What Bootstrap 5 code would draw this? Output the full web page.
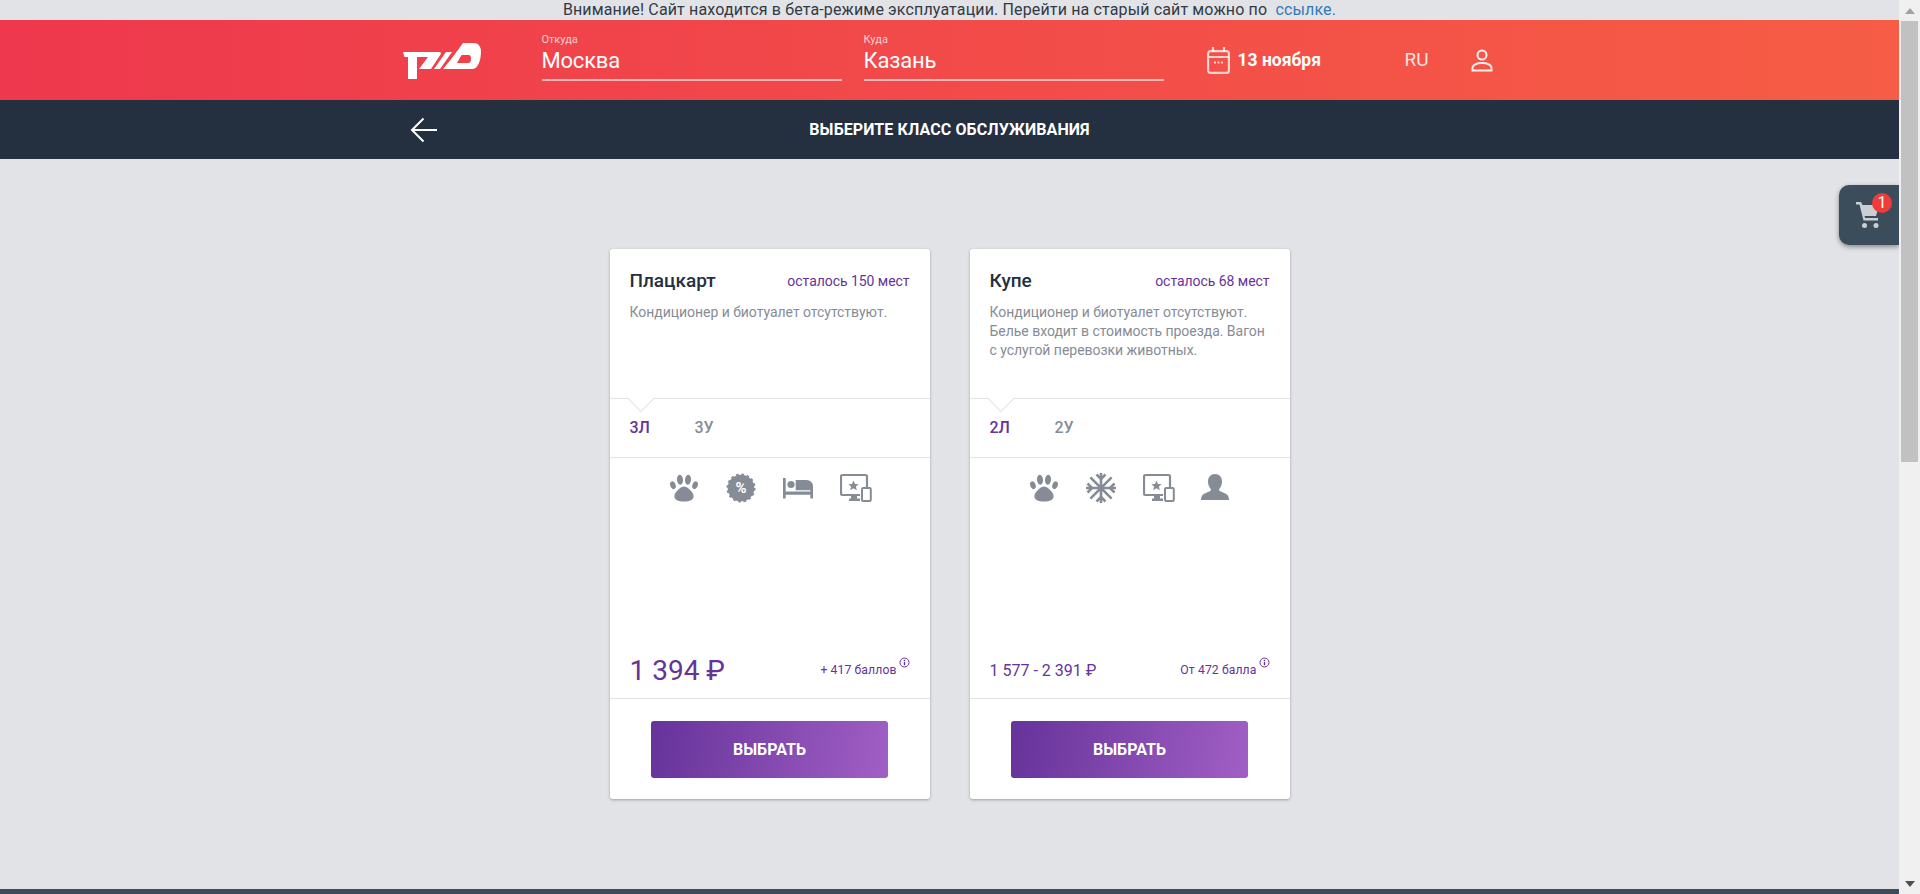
<!DOCTYPE html>
<html lang="ru">
<head>
    <meta charset="UTF-8">
    <meta name="viewport" content="width=device-width, initial-scale=1.0">
    <title>Выберите класс обслуживания</title>
    <link href="https://cdn.jsdelivr.net/npm/bootstrap@5.3.0/dist/css/bootstrap.min.css" rel="stylesheet">
    <style>
        html, body { height: 894px; overflow: hidden; }
        body { font-family: Roboto, "Liberation Sans", sans-serif; background: #e1e3e7; color: #242f3f; }

        /* страница и полоса прокрутки */
        .page-col { width: 1899px; height: 894px; position: relative; overflow: hidden; }
        .fake-scroll { width: 21px; height: 894px; background: #f0f0f0; }
        .fake-scroll .thumb { width: 17px; height: 441px; background: #c1c1c1; margin: 0 2px; }
        .scroll-btn { height: 21px; }

        .beta-note { height: 20px; font-size: 16px; letter-spacing: .14px; line-height: 20px; color: #333a45; white-space: pre; }
        .beta-note a { color: #337ab7; text-decoration: none; }

        /* шапка */
        .top-head { height: 80px; background: linear-gradient(90deg, #ee384d 0%, #f65d45 100%); color: #fff; }
        .head-wrap { width: 1100px; height: 80px; }
        .logo-box { width: 142px; padding-left: 3px; padding-top: 23px; }
        .city-field { width: 300px; margin-right: 22px; border-bottom: 2px solid rgba(255,255,255,.6); height: 61px; padding-top: 13px; }
        .city-field .cap { font-size: 11px; line-height: 13px; color: rgba(255,255,255,.75); }
        .city-field .val { font-size: 22px; line-height: 29px; letter-spacing: -.2px; }
        .date-box { width: 198px; margin-left: 21px; font-size: 17.5px; font-weight: 700; }
        .date-box svg { margin-right: 8px; }
        .lang-box { width: 66px; font-size: 19px; color: rgba(255,255,255,.85); }

        .sub-head { height: 59px; background: #242f3f; color: #fff; }
        .sub-head .head-wrap { position: relative; }
        .back-arrow { position: absolute; left: 10px; top: 17px; }
        .sub-title { font-size: 16px; font-weight: 700; letter-spacing: .1px; }

        /* карточки */
        .class-area { padding-top: 90px; gap: 40px; height: 730px; }
        .class-card { width: 320px; height: 550px; border: 0; border-radius: 3px; box-shadow: 0 1px 3px rgba(0,0,0,.3); }
        .sec-top { height: 149px; padding: 21px 20px 0; }
        .class-name { font-size: 19px; font-weight: 500; line-height: 22px; color: #242f3f; }
        .places { font-size: 14px; letter-spacing: -.05px; color: #65339a; line-height: 22px; }
        .class-desc { font-size: 14px; letter-spacing: -.03px; line-height: 19px; color: #868c96; margin-top: 11px; }
        .sec-tabs { height: 59px; border-top: 1px solid #e1e3e7; padding-left: 20px; position: relative; font-size: 16px; font-weight: 500; color: #868c96; }
        .sec-tabs::before { content: ""; position: absolute; left: 21px; top: -11px; width: 20px; height: 20px; background: #fff; border-right: 1px solid #e1e3e7; border-bottom: 1px solid #e1e3e7; transform: rotate(45deg); }
        .sec-tabs .tab-item { width: 65px; position: relative; }
        .sec-tabs .tab-on { color: #65339a; }
        .sec-icons { height: 183px; border-top: 1px solid #e1e3e7; padding-top: 15px; gap: 27px; }
        .sec-price { height: 58px; padding: 0 20px; color: #65339a; }
        .price-big { font-size: 28px; line-height: 34px; padding-top: 4px; }
        .price-small { font-size: 16px; line-height: 34px; padding-top: 4px; }
        .bonus { font-size: 12.2px; letter-spacing: .1px; margin-bottom: 2px; }
        .bonus svg { vertical-align: 6px; margin-left: 2px; }
        .sec-btn { border-top: 1px solid #e1e3e7; height: 101px; padding-top: 22px; text-align: center; }
        .pick-btn { width: 237px; height: 57px; border: 0; border-radius: 3px; color: #fff; font-size: 16px; font-weight: 700; background: linear-gradient(100deg, #65339a 0%, #a15fc5 100%); }
        .pick-btn:hover { color: #fff; background: linear-gradient(100deg, #65339a 0%, #a15fc5 100%); }

        .ic { color: #868c96; display: block; flex: none; }
        .ic-wide { margin-right: -2px; }

        /* корзина поверх контента */
        .cart-tab { position: absolute; right: 0; top: 185px; width: 60px; height: 60px; background: #3b4c5a; border-radius: 10px 0 0 10px; box-shadow: 0 2px 5px rgba(0,0,0,.4); }
        .cart-tab svg { position: absolute; left: 17px; top: 17px; }
        .cart-count { position: absolute; left: 33px; top: 8px; width: 20px; height: 20px; border-radius: 50%; background: #ef3b39; color: #fff; font-size: 16px; line-height: 20px; text-align: center; }

        .foot-bar { height: 5px; background: #3b4c5a; }
    </style>
</head>
<body>
<svg width="0" height="0" class="position-absolute">
    <symbol id="i-paw" viewBox="0 0 30 30">
        <ellipse cx="3.9" cy="12.2" rx="2.7" ry="4" transform="rotate(-20 3.9 12.2)" fill="currentColor"/>
        <ellipse cx="11" cy="6.8" rx="3" ry="5" transform="rotate(-6 11 6.8)" fill="currentColor"/>
        <ellipse cx="19" cy="6.8" rx="3" ry="5" transform="rotate(6 19 6.8)" fill="currentColor"/>
        <ellipse cx="26.1" cy="12.2" rx="2.7" ry="4" transform="rotate(20 26.1 12.2)" fill="currentColor"/>
        <path d="M15 13.5c3.2 0 5 2.3 7 4.6 1.6 1.9 2.6 3.2 2.6 5.2 0 3.6-3.6 5.2-9.6 5.2s-9.6-1.6-9.6-5.2c0-2 1-3.3 2.6-5.2 2-2.3 3.800-4.600 7-4.600z" fill="currentColor"/>
    </symbol>
    <symbol id="i-bed" viewBox="0 0 30 30">
        <path d="M0 5h2.700v13.500h24.600V15h2.700v10.500h-2.700v-3.800H2.700v3.800H0z" fill="currentColor"/>
        <circle cx="8" cy="11.500" r="3.600" fill="currentColor"/>
        <path d="M12.700 7h10.800c3.500 0 6.500 2.800 6.500 6.300v4H12.700z" fill="currentColor"/>
    </symbol>
    <symbol id="i-screen" viewBox="0 0 32 30">
        <path d="M27 15V3.500A1.500 1.500 0 0 0 25.500 2h-23A1.500 1.500 0 0 0 1 3.500v17A1.500 1.500 0 0 0 2.500 22H20" fill="none" stroke="currentColor" stroke-width="2.200"/>
        <path d="M11 22h6v3.500h3V28H9v-2.500h2z" fill="currentColor"/>
        <rect x="22" y="15" width="8.800" height="13" rx="1.200" fill="none" stroke="currentColor" stroke-width="2"/>
        <path d="M13.500 7.500l1.500 3.400 3.700.3-2.800 2.400.9 3.600-3.300-1.900-3.300 1.900.9-3.600-2.800-2.400 3.700-.3z" fill="currentColor"/>
    </symbol>
    <symbol id="i-snow" viewBox="0 0 30 30">
        <g fill="none" stroke="currentColor" stroke-width="2.600">
            <path d="M15 0v30M0 15h30M4.400 4.400l21.200 21.200M25.600 4.400L4.400 25.600"/>
            <path d="M10.500 1.500l4.500 4.500 4.500-4.500M10.500 28.500l4.500-4.500 4.500 4.500M1.500 10.500L6 15l-4.500 4.500M28.500 10.500L24 15l4.500 4.500"/>
        </g>
    </symbol>
    <symbol id="i-man" viewBox="0 0 30 30">
        <path d="M15 1c4.400 0 7 3.400 7 7.500 0 3-1 5.500-2.600 7.300-.5.600-.4 1.700.3 2.100 1.800 1 6 2 7.800 4 .9 1 1.500 3 1.500 5.100H1c0-2.100.6-4.100 1.500-5.100 1.800-2 6-3 7.800-4 .7-.4.8-1.500.3-2.100C9 14 8 11.500 8 8.500 8 4.400 10.600 1 15 1z" fill="currentColor"/>
    </symbol>
    <symbol id="i-info" viewBox="0 0 11 11">
        <circle cx="5.500" cy="5.500" r="4.500" fill="none" stroke="currentColor" stroke-width="1"/>
        <path d="M4.800 2.700h1.400v1.300H4.800zM4.800 4.700h1.400v3.600H4.800z" fill="currentColor"/>
    </symbol>
</svg>

<div class="d-flex">
    <div class="page-col">
        <div class="beta-note text-center">Внимание! Сайт находится в бета-режиме эксплуатации. Перейти на старый сайт можно по  <a href="#">ссылке.</a></div>

        <div class="top-head">
            <div class="head-wrap mx-auto d-flex">
                <div class="logo-box">
                    <svg width="80" height="36" viewBox="0 0 80 36" fill="#fff">
                        <path d="M0 9h36c2 0 2.500 1 1.500 2.500L28 26H16l9-12H14v22H5V14H1.500z"/>
                        <path d="M31 26L43 9h6L37 26z"/>
                        <path fill-rule="evenodd" d="M60 0h11c5 0 7.500 5 7 10-.5 8-3 16-9 16H40l9-11zM58.500 12L54 20h11.500c1.500 0 2.500-1.500 2.500-4s-.5-4-2.500-4z"/>
                    </svg>
                </div>
                <div class="city-field">
                    <div class="cap">Откуда</div>
                    <div class="val">Москва</div>
                </div>
                <div class="city-field">
                    <div class="cap">Куда</div>
                    <div class="val">Казань</div>
                </div>
                <div class="date-box d-flex align-items-center">
                    <svg width="23" height="27" viewBox="0 0 23 27" fill="none" stroke="rgba(255,255,255,.75)" stroke-width="2.200">
                        <rect x="1.100" y="4.100" width="20.800" height="21.800" rx="2.500"/>
                        <path d="M1.500 10h20M6 0v5M17 0v5"/>
                        <path d="M7 15.500h2M10.500 15.500h2M14 15.500h2" stroke-width="1.800"/>
                    </svg>
                    <span>13 ноября</span>
                </div>
                <div class="lang-box d-flex align-items-center">RU</div>
                <div class="d-flex align-items-center">
                    <svg width="22" height="23" viewBox="0 0 22 23" fill="none" stroke="rgba(255,255,255,.9)" stroke-width="2">
                        <circle cx="11" cy="6" r="4.500"/>
                        <path d="M1.500 21.500v-2.500c0-3 4-5 9.500-5s9.500 2 9.500 5v2.500z"/>
                    </svg>
                </div>
            </div>
        </div>

        <div class="sub-head">
            <div class="head-wrap mx-auto h-100 d-flex align-items-center justify-content-center">
                <svg class="back-arrow" width="28" height="26" viewBox="0 0 28 26" fill="none" stroke="#fff" stroke-width="2">
                    <path d="M27 13H2M13.500 1.500L2 13l11.500 11.500"/>
                </svg>
                <div class="sub-title text-uppercase">Выберите класс обслуживания</div>
            </div>
        </div>

        <div class="class-area d-flex justify-content-center align-items-start">
            <div class="card class-card">
                <div class="sec-top">
                    <div class="d-flex justify-content-between">
                        <div class="class-name">Плацкарт</div>
                        <div class="places">осталось 150 мест</div>
                    </div>
                    <div class="class-desc">Кондиционер и биотуалет отсутствуют.</div>
                </div>
                <div class="sec-tabs d-flex align-items-center">
                    <div class="tab-item tab-on">3Л</div>
                    <div class="tab-item">3У</div>
                </div>
                <div class="sec-icons d-flex justify-content-center">
                    <svg class="ic" width="30" height="30"><use href="#i-paw"/></svg>
                    <svg class="ic" width="30" height="30" viewBox="0 0 30 30">
                        <circle cx="15" cy="15" r="13.300" fill="currentColor"/>
                        <circle cx="15" cy="15" r="13.500" fill="none" stroke="currentColor" stroke-width="2" stroke-dasharray="2.600 2.700"/>
                        <text x="15" y="20" text-anchor="middle" fill="#fff" font-family="Roboto" font-weight="700" font-size="15">%</text>
                    </svg>
                    <svg class="ic" width="30" height="30"><use href="#i-bed"/></svg>
                    <svg class="ic ic-wide" width="32" height="30"><use href="#i-screen"/></svg>
                </div>
                <div class="sec-price d-flex justify-content-between align-items-center">
                    <div class="price-big">1 394 ₽</div>
                    <div class="bonus">+ 417 баллов<svg width="11" height="11"><use href="#i-info"/></svg></div>
                </div>
                <div class="sec-btn">
                    <button type="button" class="btn pick-btn">ВЫБРАТЬ</button>
                </div>
            </div>

            <div class="card class-card">
                <div class="sec-top">
                    <div class="d-flex justify-content-between">
                        <div class="class-name">Купе</div>
                        <div class="places">осталось 68 мест</div>
                    </div>
                    <div class="class-desc">Кондиционер и биотуалет отсутствуют. Белье входит в стоимость проезда. Вагон с услугой перевозки животных.</div>
                </div>
                <div class="sec-tabs d-flex align-items-center">
                    <div class="tab-item tab-on">2Л</div>
                    <div class="tab-item">2У</div>
                </div>
                <div class="sec-icons d-flex justify-content-center">
                    <svg class="ic" width="30" height="30"><use href="#i-paw"/></svg>
                    <svg class="ic" width="30" height="30"><use href="#i-snow"/></svg>
                    <svg class="ic ic-wide" width="32" height="30"><use href="#i-screen"/></svg>
                    <svg class="ic" width="30" height="30"><use href="#i-man"/></svg>
                </div>
                <div class="sec-price d-flex justify-content-between align-items-center">
                    <div class="price-small">1 577 - 2 391 ₽</div>
                    <div class="bonus">От 472 балла<svg width="11" height="11"><use href="#i-info"/></svg></div>
                </div>
                <div class="sec-btn">
                    <button type="button" class="btn pick-btn">ВЫБРАТЬ</button>
                </div>
            </div>
        </div>

        <div class="foot-bar"></div>

        <div class="cart-tab">
            <svg width="26" height="27" viewBox="0 0 26 27" fill="#c9d0d5">
                <path d="M0 0h5l1.500 3H23l-3 11H8.500l.7 2H22v2.500H7.500L3.500 2.500H0z"/>
                <circle cx="8.500" cy="23.500" r="2.500"/>
                <circle cx="20" cy="23.500" r="2.500"/>
            </svg>
            <div class="cart-count">1</div>
        </div>
    </div>

    <div class="fake-scroll d-flex flex-column">
        <div class="scroll-btn d-flex align-items-center justify-content-center">
            <svg width="10" height="6" viewBox="0 0 10 6"><path d="M5 0l5 6H0z" fill="#a3a3a3"/></svg>
        </div>
        <div class="thumb"></div>
        <div class="flex-grow-1"></div>
        <div class="scroll-btn d-flex align-items-center justify-content-center">
            <svg width="10" height="6" viewBox="0 0 10 6"><path d="M5 6L0 0h10z" fill="#505050"/></svg>
        </div>
    </div>
</div>

<script src="https://cdn.jsdelivr.net/npm/bootstrap@5.3.0/dist/js/bootstrap.bundle.min.js"></script>
</body>
</html>
